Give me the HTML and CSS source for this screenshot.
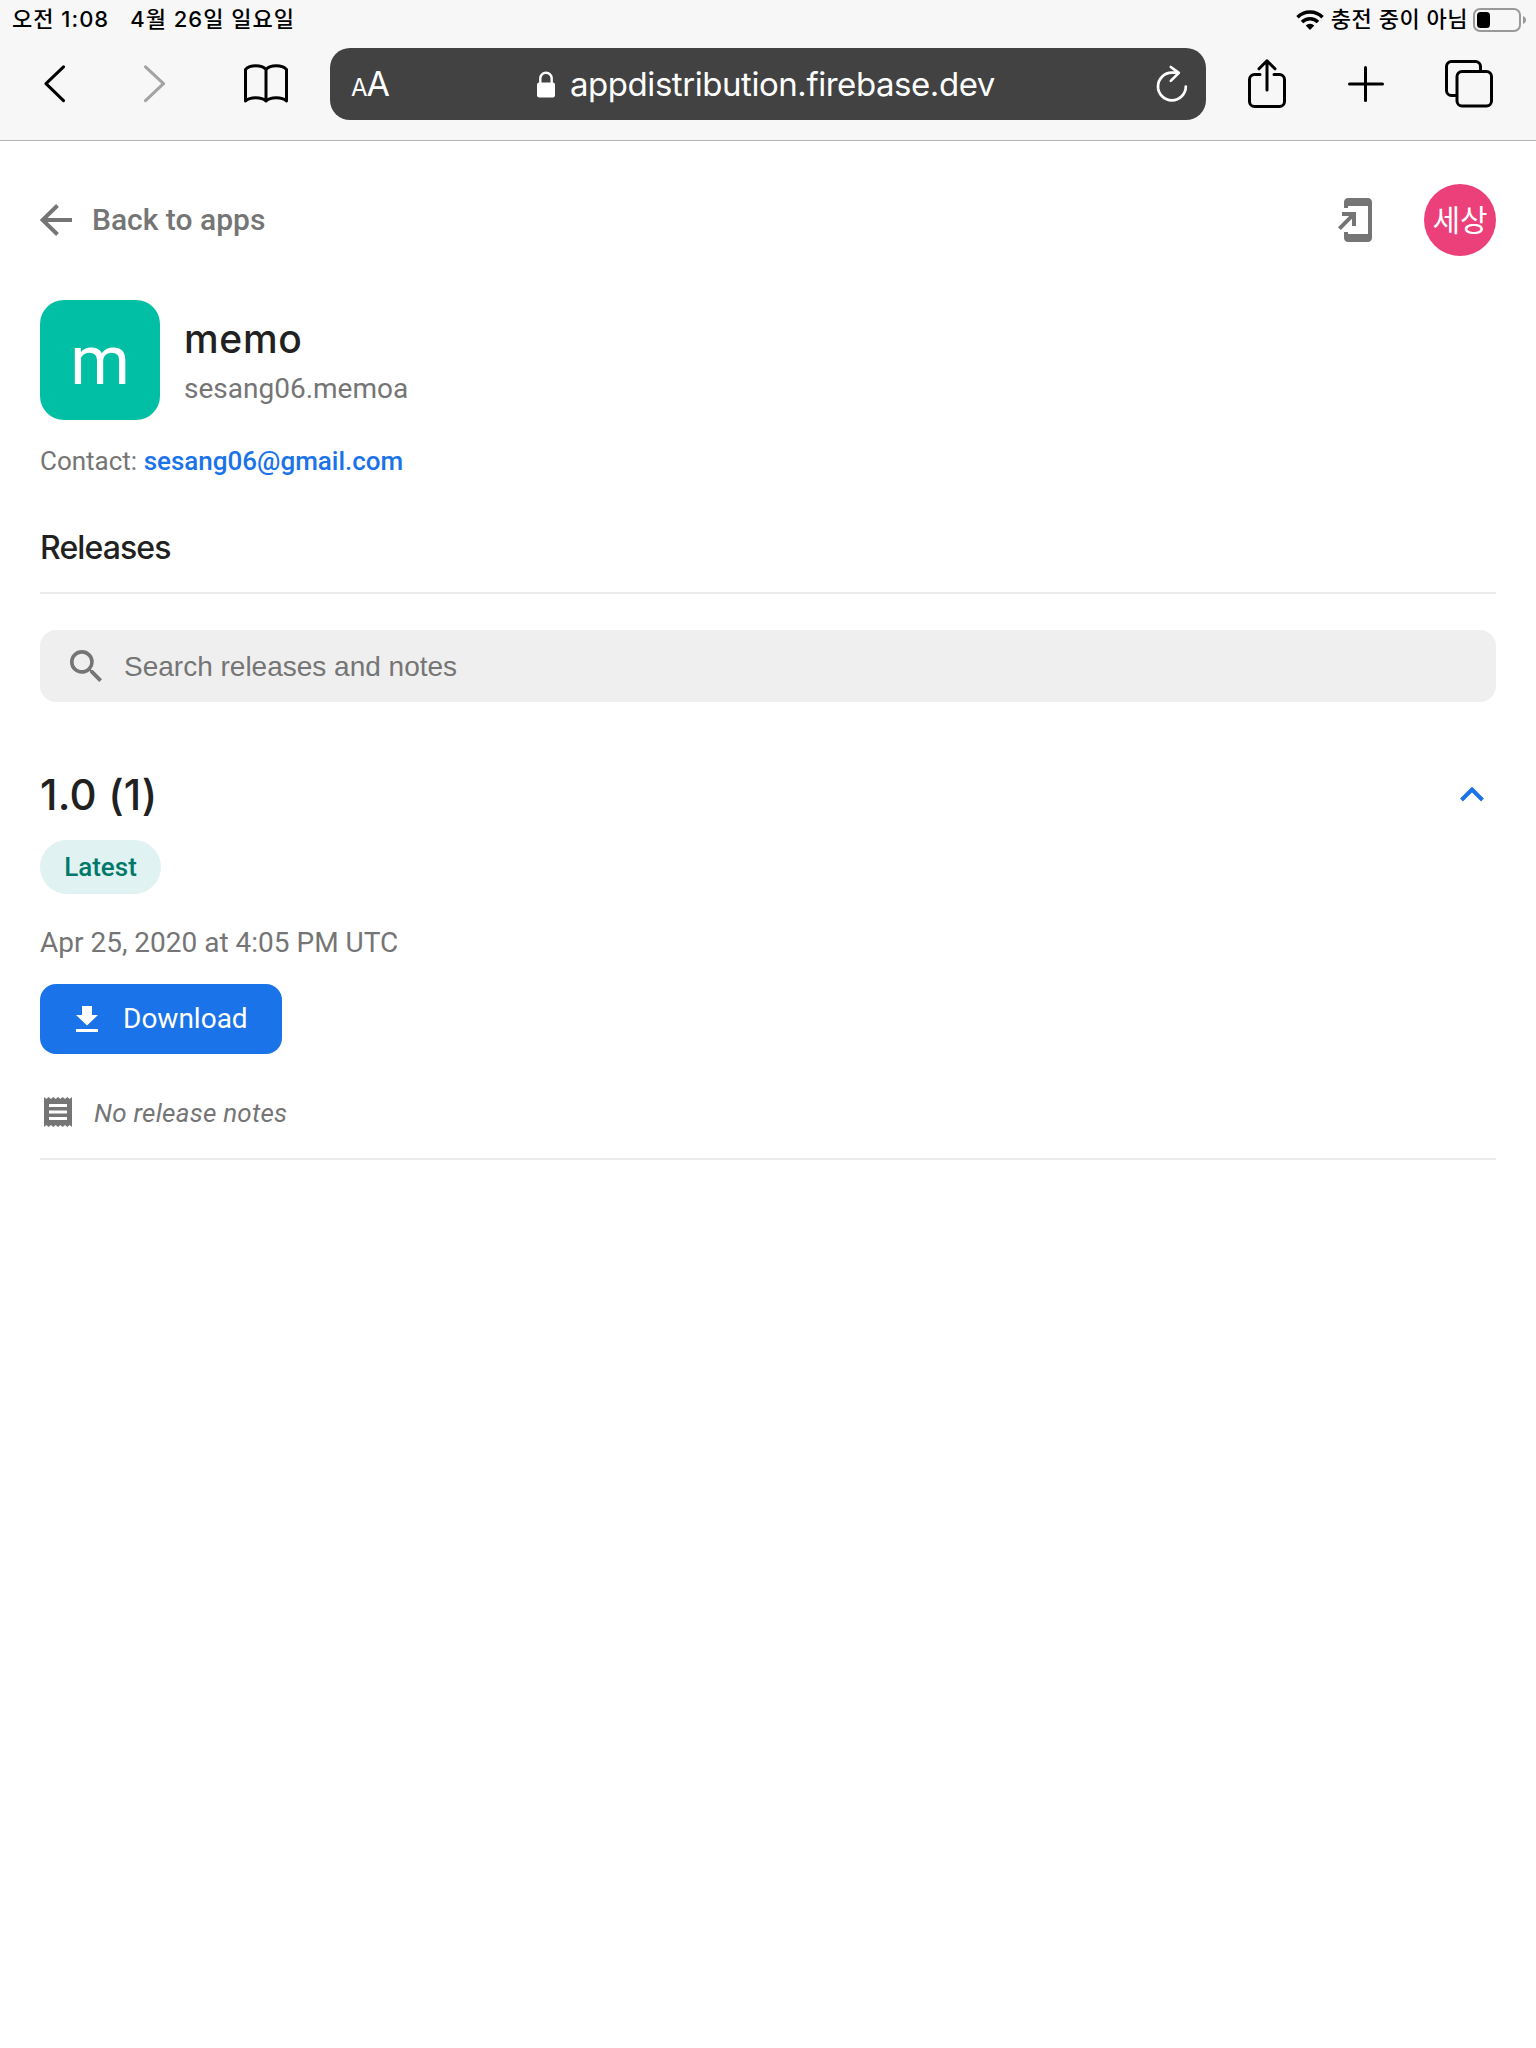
FILE: index.html
```html
<!DOCTYPE html>
<html lang="ko">
<head>
    <meta charset="UTF-8">
    <meta name="viewport" content="width=device-width, initial-scale=1.0">
    <title>memo - App Distribution</title>
    <link rel="stylesheet" href="styles.css">
</head>
<body>
    <header class="browser">
        <div class="status-bar">
            <span class="status-time">오전 1:08</span>
            <span class="status-date">4월 26일 일요일</span>
            <svg class="wifi" width="28" height="20" viewBox="0 0 28 20">
                <path d="M1.5 7.2a17.8 17.8 0 0 1 25 0M6 12a11.4 11.4 0 0 1 16 0" fill="none" stroke="#000" stroke-width="3.6"/>
                <path d="M14 20l-4.3-4.4a6.2 6.2 0 0 1 8.6 0z"/>
            </svg>
            <span class="status-charge">충전 중이 아님</span>
            <svg class="battery" width="53" height="24" viewBox="0 0 53 24">
                <rect x="1" y="1" width="46" height="22" rx="6" fill="none" stroke="#999" stroke-width="2"/>
                <rect x="4" y="4" width="13" height="16" rx="3.5"/>
                <path d="M50 8c4 1.500 4 6.500 0 8z" fill="#999"/>
            </svg>
        </div>
        <nav class="toolbar">
            <svg class="icon back" width="22" height="38" viewBox="0 0 22 38"><path d="M19.500 1.800L2 18.700l17.500 16.900"/></svg>
            <svg class="icon forward" width="22" height="38" viewBox="0 0 22 38"><path d="M1.500 1.800L19.500 18.700l-18 16.900"/></svg>
            <svg class="icon book" width="44" height="40" viewBox="0 0 44 40">
                <path d="M22 5.500C17.500.6 6 .6 1.500 5.500V37C6 32.600 17.500 32.600 22 37C26.500 32.600 38 32.600 42.500 37V5.500C38 .6 26.500.6 22 5.500zV37"/>
            </svg>
            <div class="address-bar">
                <span class="reader"><small>A</small>A</span>
                <div class="address">
                    <svg width="18" height="27" viewBox="0 0 18 27">
                        <path d="M3.300 13V7.500a5.700 5.700 0 0 1 11.400 0V13" fill="none" stroke="#fff" stroke-width="2.400"/>
                        <rect y="11.500" width="18" height="15" rx="2.200" fill="#fff"/>
                    </svg>
                    <span>appdistribution.firebase.dev</span>
                </div>
                <svg class="reload" width="32" height="38" viewBox="0 0 32 38">
                    <path d="M29.800 21.500A13.900 13.900 0 1 1 15.900 7.600h6.500M14.800 2l8 5.900-8 8"/>
                </svg>
            </div>
            <svg class="icon share" width="38" height="50" viewBox="0 0 38 50">
                <path d="M12 15.500H6.500a5 5 0 0 0-5 5v22a5 5 0 0 0 5 5h25a5 5 0 0 0 5-5v-22a5 5 0 0 0-5-5H26M19 31V2M11 9.800L19 1.800l8 8"/>
            </svg>
            <svg class="icon plus" width="36" height="38" viewBox="0 0 36 38"><path d="M17.500 2.500v33M1.500 19h33"/></svg>
            <svg class="icon tabs" width="48" height="48" viewBox="0 0 48 48">
                <path d="M11.500 35.500H6.500a5 5 0 0 1-5-5v-24a5 5 0 0 1 5-5h24a5 5 0 0 1 5 5v5"/>
                <rect x="12" y="11.500" width="34.500" height="34.500" rx="5"/>
            </svg>
        </nav>
    </header>

    <main class="page">
        <div class="top-row">
            <a class="back-link">
                <svg width="32" height="32" viewBox="0 0 32 32"><path d="M32 16H2.500M17.500 1.500L2.500 16l15 14.500"/></svg>
                <span>Back to apps</span>
            </a>
            <svg class="add-home" width="48" height="48" viewBox="0 0 24 24">
                <path d="M18 1.010L8 1c-1.100 0-2 .9-2 2v3h2V5h10v14H8v-1H6v3c0 1.100.9 2 2 2h10c1.100 0 2-.9 2-2V3c0-1.100-.9-1.990-2-1.990zM10 15h2V8H5v2h3.590L3 15.590 4.410 17 10 11.410z"/>
            </svg>
            <div class="avatar">세상</div>
        </div>

        <section class="app">
            <div class="app-icon">m</div>
            <div class="app-info">
                <h1>memo</h1>
                <p>sesang06.memoa</p>
            </div>
        </section>
        <p class="contact">Contact: <a>sesang06@gmail.com</a></p>

        <h2>Releases</h2>

        <div class="search">
            <svg width="32" height="32" viewBox="3 3 17.500 17.500">
                <path d="M15.500 14h-.79l-.28-.27A6.471 6.471 0 0 0 16 9.500 6.500 6.500 0 1 0 9.500 16c1.610 0 3.090-.59 4.230-1.570l.27.28v.79l5 4.990L20.490 19l-4.990-5zm-6 0C7.010 14 5 11.990 5 9.500S7.010 5 9.500 5 14 7.010 14 9.500 11.990 14 9.500 14z"/>
            </svg>
            <span>Search releases and notes</span>
        </div>

        <article class="release">
            <div class="release-head">
                <h3>1.0 (1)</h3>
                <svg width="24" height="15" viewBox="0 0 24 15"><path d="M1.500 13L12 2.500 22.500 13"/></svg>
            </div>
            <span class="tag">Latest</span>
            <p class="date">Apr 25, 2020 at 4:05 PM UTC</p>
            <button class="download">
                <svg width="22" height="26" viewBox="0 0 22 26"><path d="M6 0h10v9h6L11 19.500 0 9h6zM0 23h22v3H0z"/></svg>
                <span>Download</span>
            </button>
            <div class="notes">
                <svg width="28" height="30" viewBox="0 0 28 30">
                    <path d="M0 0l2.330 2 2.330-2L7 2l2.330-2 2.330 2L14 0l2.330 2 2.330-2L21 2l2.330-2 2.330 2L28 0v30l-2.330-2-2.330 2L21 28l-2.330 2-2.330-2L14 30l-2.330-2-2.330 2L7 28l-2.330 2-2.330-2L0 30z"/>
                    <path d="M5 7h18v3H5zM5 13.500h18v3H5zM5 20h18v3H5z" fill="#fff"/>
                </svg>
                <em>No release notes</em>
            </div>
        </article>
    </main>
</body>
</html>
```
FILE: styles.css
```css
* {
    margin: 0;
    padding: 0;
    box-sizing: border-box;
}

body {
    font-family: Roboto, 'Noto Sans CJK KR', sans-serif;
    background: white;
    color: #757575;
}

svg {
    display: block;
    flex-shrink: 0;
}

.browser {
    height: 141px;
    background: #f7f7f7;
    border-bottom: 1px solid #b2b2b2;
}

.status-bar {
    display: flex;
    align-items: center;
    height: 40px;
    padding: 0 10px 0 12px;
    color: #000;
    font: 500 22px/38px Inter, 'Noto Sans CJK KR', sans-serif;
    letter-spacing: 1px;
    white-space: nowrap;
}

.status-time,
.status-date,
.status-charge {
    padding-bottom: 2px;
}

.status-date {
    margin-left: 21px;
}

.wifi {
    margin-left: auto;
}

.status-charge {
    margin: 0 5px 0 7px;
    letter-spacing: 0.5px;
}

.toolbar {
    display: flex;
    align-items: center;
    height: 88px;
    padding-left: 44px;
}

.icon {
    fill: none;
    stroke: #000;
    stroke-width: 3;
    stroke-linecap: round;
    stroke-linejoin: round;
}

.forward {
    margin: 0 78px;
    stroke: #a3a3a3;
}

.address-bar {
    display: flex;
    align-items: center;
    width: 876px;
    height: 72px;
    margin: 0 42px;
    padding: 0 18px 0 21px;
    border-radius: 20px;
    background: #424242;
    color: white;
    font: 400 33px/72px Inter, sans-serif;
}

.reader {
    width: 40px;
    padding-top: 4px;
    font-size: 34px;
    letter-spacing: -1px;
    white-space: nowrap;
}

.reader small {
    font-size: 24px;
}

.address {
    display: flex;
    flex: 1;
    align-items: center;
    gap: 15px;
    padding-left: 146px;
    letter-spacing: -0.45px;
}

.reload {
    fill: none;
    stroke: white;
    stroke-width: 2.7;
    stroke-linecap: round;
    stroke-linejoin: round;
}

.plus {
    margin: 0 61px 0 62px;
}

.page {
    padding: 43px 40px 0;
}

.top-row {
    display: flex;
    align-items: center;
    height: 72px;
}

.back-link {
    display: flex;
    align-items: center;
    gap: 20px;
    font-size: 30px;
    font-weight: 500;
}

.back-link span {
    padding-bottom: 2px;
}

.back-link svg {
    fill: none;
    stroke: #757575;
    stroke-width: 4;
}

.add-home {
    margin-left: auto;
    fill: #757575;
}

.avatar {
    width: 72px;
    height: 72px;
    margin-left: 44px;
    border-radius: 50%;
    background: #ec407a;
    color: white;
    font-size: 30px;
    line-height: 74px;
    text-align: center;
}

.app {
    display: flex;
    gap: 24px;
    margin-top: 44px;
}

.app-icon {
    width: 120px;
    height: 120px;
    border-radius: 24px;
    background: #00bfa5;
    color: white;
    font-size: 68px;
    line-height: 123px;
    text-align: center;
}

h1, h2, h3 {
    font-family: Inter, sans-serif;
    font-weight: 500;
    color: #212121;
}

h1 {
    margin-top: 14px;
    font-size: 39px;
    line-height: 49px;
    letter-spacing: 0.7px;
}

.app-info p {
    margin-top: 8px;
    font-size: 28px;
    line-height: 36px;
}

.contact {
    margin-top: 24px;
    font-size: 26px;
    line-height: 34px;
}

.contact a {
    color: #1a73e8;
    font-weight: 500;
}

h2 {
    height: 72px;
    margin-top: 44px;
    border-bottom: 2px solid #ebebeb;
    font-size: 32px;
    line-height: 51px;
    letter-spacing: -0.9px;
}

.search {
    display: flex;
    align-items: center;
    gap: 22px;
    height: 72px;
    margin-top: 36px;
    padding-left: 30px;
    border-radius: 16px;
    background: #efefef;
    font-family: 'Liberation Sans', sans-serif;
    font-size: 28px;
}

.search span {
    padding-top: 2px;
}

.search svg {
    fill: #757575;
}

.release {
    margin-top: 68px;
    border-bottom: 2px solid #ebebeb;
}

.release-head {
    display: flex;
    align-items: center;
    justify-content: space-between;
    height: 50px;
    padding: 0 12px 2px 0;
}

.release-head svg {
    fill: none;
    stroke: #1a73e8;
    stroke-width: 4;
}

h3 {
    font-size: 42px;
    letter-spacing: 0.2px;
}

.tag {
    display: block;
    width: 121px;
    height: 54px;
    margin-top: 20px;
    border-radius: 27px;
    background: #e0f2f1;
    color: #00796b;
    font-size: 26px;
    font-weight: 500;
    line-height: 54px;
    text-align: center;
}

.date {
    margin-top: 31px;
    font-size: 28px;
    line-height: 36px;
}

.download {
    display: flex;
    align-items: center;
    gap: 25px;
    width: 242px;
    height: 70px;
    margin-top: 23px;
    padding-left: 36px;
    border: none;
    border-radius: 16px;
    background: #1a73e8;
    color: white;
    font-family: inherit;
    font-size: 28px;
}

.download span {
    padding-bottom: 2px;
}

.download svg {
    fill: white;
}

.notes {
    display: flex;
    align-items: center;
    gap: 22px;
    height: 40px;
    margin: 38px 0 26px 4px;
    font-size: 26px;
    letter-spacing: 0.25px;
}

.notes em {
    padding-top: 2px;
}

.notes svg {
    fill: #757575;
}
```
